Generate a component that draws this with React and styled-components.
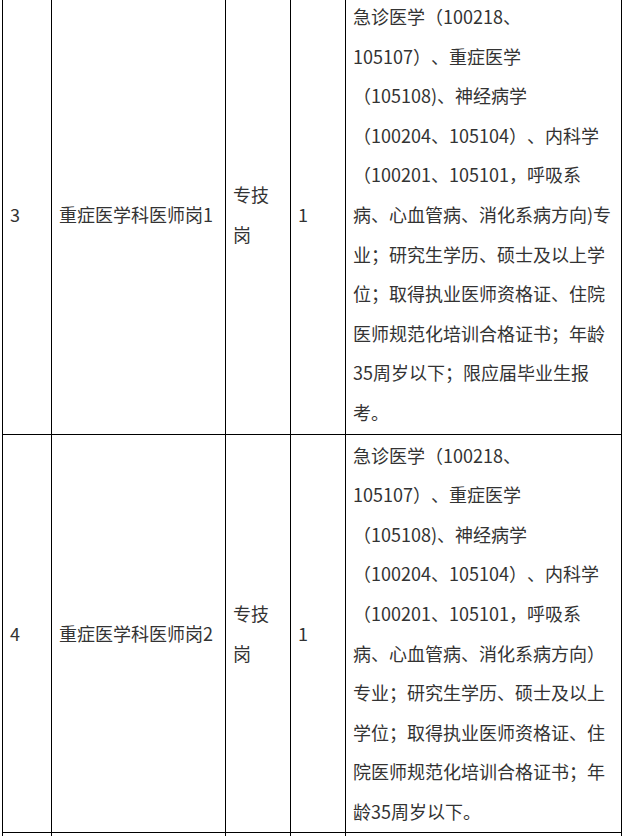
import React from "react";
import styled, { createGlobalStyle } from "styled-components";

const GlobalStyle = createGlobalStyle`
  html, body {
    margin: 0;
    padding: 0;
    background: #fff;
    overflow: hidden;
  }
  body {
    font-family: "Noto Sans CJK SC", "Microsoft YaHei", sans-serif;
  }
`;

const Page = styled.div`
  width: 624px;
  height: 836px;
  overflow: hidden;
  padding-left: 2px;
  box-sizing: border-box;
`;

const Table = styled.table`
  margin-top: -5px;
  width: 619px;
  table-layout: fixed;
  border-collapse: collapse;
  color: #333;
  font-size: 18px;
  line-height: 39.6px;
  text-spacing-trim: space-all;
`;

const Cell = styled.td`
  border: 1px solid #000;
  padding: 1px 7px;
  vertical-align: middle;
  word-break: break-all;
`;

const EmptyCell = styled(Cell)`
  height: 60px;
`;

const rows = [
  {
    no: "3",
    name: "重症医学科医师岗1",
    kind: "专技岗",
    count: "1",
    lines: [
      "急诊医学（100218、",
      "105107）、重症医学",
      "（105108)、神经病学",
      "（100204、105104）、内科学",
      "（100201、105101，呼吸系",
      "病、心血管病、消化系病方向)专",
      "业；研究生学历、硕士及以上学",
      "位；取得执业医师资格证、住院",
      "医师规范化培训合格证书；年龄",
      "35周岁以下；限应届毕业生报",
      "考。",
    ],
  },
  {
    no: "4",
    name: "重症医学科医师岗2",
    kind: "专技岗",
    count: "1",
    lines: [
      "急诊医学（100218、",
      "105107）、重症医学",
      "（105108)、神经病学",
      "（100204、105104）、内科学",
      "（100201、105101，呼吸系",
      "病、心血管病、消化系病方向）",
      "专业；研究生学历、硕士及以上",
      "学位；取得执业医师资格证、住",
      "院医师规范化培训合格证书；年",
      "龄35周岁以下。",
    ],
  },
];

export default function App() {
  return (
    <Page>
      <GlobalStyle />
      <Table>
        <colgroup>
          <col style={{ width: 49 }} />
          <col style={{ width: 174 }} />
          <col style={{ width: 65 }} />
          <col style={{ width: 55 }} />
          <col style={{ width: 276 }} />
        </colgroup>
        <tbody>
          {rows.map((r) => (
            <tr key={r.no}>
              <Cell>{r.no}</Cell>
              <Cell>{r.name}</Cell>
              <Cell>{r.kind}</Cell>
              <Cell>{r.count}</Cell>
              <Cell>
                {r.lines.map((l, i) => (
                  <React.Fragment key={i}>
                    {l}
                    {i < r.lines.length - 1 && <br />}
                  </React.Fragment>
                ))}
              </Cell>
            </tr>
          ))}
          <tr>
            <EmptyCell />
            <EmptyCell />
            <EmptyCell />
            <EmptyCell />
            <EmptyCell />
          </tr>
        </tbody>
      </Table>
    </Page>
  );
}
